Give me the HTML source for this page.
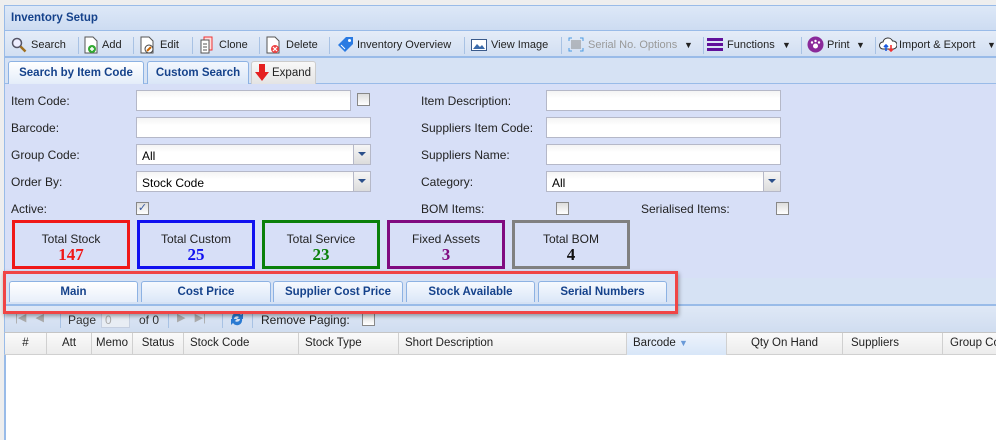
<!DOCTYPE html>
<html><head><meta charset="utf-8"><style>
*{box-sizing:border-box;margin:0;padding:0}
body{width:996px;height:440px;overflow:hidden;background:#eeeeee;font-family:"Liberation Sans",Arial,sans-serif;font-size:12px;color:#000;position:relative}
.a{position:absolute}
.title{left:4px;top:5px;width:992px;height:26px;background:linear-gradient(#dde8f7,#cddcf2);border:1px solid #99bbe8;border-right:none;font-weight:bold;color:#15428b;padding:6px 0 0 6px;font-size:11.5px}
.tb{left:4px;top:31px;width:992px;height:27px;background:linear-gradient(#e4ecf8,#d2dff2);border-left:1px solid #99bbe8;border-bottom:2px solid #99bbe8;font-size:11px}
.tbi{position:absolute;top:8px;color:#222;white-space:nowrap}
.sep{position:absolute;top:6px;width:1px;height:17px;background:#a8c2e4}
.tabs{left:4px;top:58px;width:992px;height:26px;background:#d6e2f4;border-left:1px solid #99bbe8;border-bottom:1px solid #99bbe8}
.tab{position:absolute;top:3px;height:23px;border:1px solid #8db2e3;border-bottom:none;border-radius:3px 3px 0 0;background:linear-gradient(#f3f7fd,#d9e6f7);font-weight:bold;color:#15428b;padding-top:5px;text-align:center;font-size:11.5px}
.form{left:4px;top:84px;width:992px;height:194px;background:#d7dff7;border-left:1px solid #99bbe8}
.lbl{position:absolute;color:#222}
.inp{position:absolute;height:21px;background:linear-gradient(#f4f4f4,#fff 40%);border:1px solid #b5b8c8;padding:4px 5px;font-size:12px}
.dd{position:absolute;right:0;top:0;width:17px;height:19px;background:linear-gradient(#f6f6f6,#dcdcdc);border-left:1px solid #b5b8c8}
.dd:after{content:"";position:absolute;left:4px;top:7px;border-left:4px solid transparent;border-right:4px solid transparent;border-top:4px solid #2a4f8a}
.cb{position:absolute;width:13px;height:13px;border:1px solid #888;background:linear-gradient(#ddd,#fff)}
.box{position:absolute;top:220px;width:118px;height:49px;border:3px solid;text-align:center;padding-top:9px;color:#222}
.box b{display:block;font-family:"Liberation Serif",serif;font-size:17px;line-height:18px}
.strip{left:4px;top:278px;width:992px;height:28px;background:#d6e2f4;border-left:1px solid #99bbe8;border-bottom:2px solid #99bbe8}
.t2{position:absolute;top:3px;height:21px;border:1px solid #8db2e3;border-bottom:none;border-radius:3px 3px 0 0;background:linear-gradient(#f6f9fe,#dbe7f8);font-weight:bold;color:#15428b;padding-top:4px;text-align:center;font-size:11.5px}
.pager{left:4px;top:306px;width:992px;height:26px;background:linear-gradient(#dfe8f6,#d0ddf0);border-left:1px solid #99bbe8}
.hdr{left:4px;top:332px;width:992px;height:23px;background:linear-gradient(#fafafa,#ececec);border-left:1px solid #99bbe8;border-bottom:1px solid #d0d0d0;border-top:1px solid #c5c5c5;font-size:11.5px}
.hc{position:absolute;top:0;height:22px;border-right:1px solid #d0d0d0;padding-top:4px;color:#222;white-space:nowrap;overflow:hidden}
.body{left:4px;top:355px;width:992px;height:85px;background:#fff;border-left:2px solid #99bbe8}
.hl{left:3px;top:271px;width:675px;height:43px;border:3px solid #f04545;box-shadow:1px 2px 4px rgba(0,0,0,.35)}
</style></head><body>
<div class="a title">Inventory Setup</div>
<div class="a tb">
 <svg class="a" style="left:6px;top:6px" width="16" height="16"><circle cx="6" cy="6" r="4.5" fill="#eef" stroke="#556" stroke-width="1.5"/><path d="M9.5 9.5l5 5" stroke="#a07020" stroke-width="2.5"/></svg><span class="tbi" style="left:26px">Search</span>
 <div class="sep" style="left:73px"></div>
 <svg class="a" style="left:78px;top:5px" width="16" height="18"><path d="M2 1h8l4 4v12H2z" fill="#fff" stroke="#555"/><circle cx="9" cy="13" r="4" fill="#3a3"/><path d="M9 11v4M7 13h4" stroke="#fff" stroke-width="1.5"/></svg><span class="tbi" style="left:97px">Add</span>
 <div class="sep" style="left:128px"></div>
 <svg class="a" style="left:134px;top:5px" width="16" height="18"><path d="M2 1h8l4 4v12H2z" fill="#fff" stroke="#555"/><circle cx="10" cy="13" r="4" fill="#fff" stroke="#444"/><path d="M8 15l4-4" stroke="#c60" stroke-width="2"/></svg><span class="tbi" style="left:155px">Edit</span>
 <div class="sep" style="left:187px"></div>
 <svg class="a" style="left:194px;top:5px" width="16" height="18"><path d="M5 1h8v13H5z" fill="#fdd" stroke="#e33"/><path d="M2 4h8v13H2z" fill="#fff" stroke="#555"/><path d="M4 8h4M4 11h4M4 14h4" stroke="#555"/></svg><span class="tbi" style="left:214px">Clone</span>
 <div class="sep" style="left:254px"></div>
 <svg class="a" style="left:260px;top:5px" width="16" height="18"><path d="M2 1h8l4 4v12H2z" fill="#fff" stroke="#555"/><circle cx="10" cy="13" r="4" fill="#e44"/><path d="M8 11l4 4M12 11l-4 4" stroke="#fff" stroke-width="1.2"/></svg><span class="tbi" style="left:281px">Delete</span>
 <div class="sep" style="left:324px"></div>
 <svg class="a" style="left:332px;top:5px" width="17" height="17"><path d="M9 1h7v7l-8 8-7-7z" fill="#2a7ae2"/><circle cx="12.5" cy="4.5" r="1.5" fill="#fff"/><path d="M4 9l4 4" stroke="#fff"/></svg><span class="tbi" style="left:352px">Inventory Overview</span>
 <div class="sep" style="left:459px"></div>
 <svg class="a" style="left:466px;top:8px" width="16" height="12"><rect x=".5" y=".5" width="15" height="11" fill="#fff" stroke="#3a5a8a"/><path d="M2 10l4-5 3 3 2-2 3 4z" fill="#3a6aaa"/></svg><span class="tbi" style="left:486px">View Image</span>
 <div class="sep" style="left:556px"></div>
 <svg class="a" style="left:563px;top:6px" width="16" height="15"><path d="M1 4V1h3M12 1h3v3M15 11v3h-3M4 14H1v-3" stroke="#4a9ae2" fill="none"/><path d="M4 3v9M6 3v9M8 3v9M10 3v9M12 3v9" stroke="#888"/></svg><span class="tbi" style="left:583px;color:#999">Serial No. Options</span><span class="tbi" style="left:679px;font-size:9px;top:9px">▼</span>
 <div class="sep" style="left:698px"></div>
 <svg class="a" style="left:702px;top:7px" width="16" height="13"><rect y="0" width="16" height="3" fill="#60109a"/><rect y="5" width="16" height="3" fill="#60109a"/><rect y="10" width="16" height="3" fill="#60109a"/></svg><span class="tbi" style="left:722px">Functions</span><span class="tbi" style="left:777px;font-size:9px;top:9px">▼</span>
 <div class="sep" style="left:796px"></div>
 <svg class="a" style="left:802px;top:5px" width="17" height="17"><circle cx="8.5" cy="8.5" r="8" fill="#8a2a9a"/><circle cx="8.5" cy="10" r="2.5" fill="#fff"/><circle cx="5" cy="6.5" r="1.2" fill="#fff"/><circle cx="12" cy="6.5" r="1.2" fill="#fff"/><circle cx="8.5" cy="5" r="1.2" fill="#fff"/></svg><span class="tbi" style="left:822px">Print</span><span class="tbi" style="left:851px;font-size:9px;top:9px">▼</span>
 <div class="sep" style="left:870px"></div>
 <svg class="a" style="left:874px;top:6px" width="18" height="15"><path d="M4 12a3.5 3.5 0 0 1 0-7 5 5 0 0 1 9.5-1 4 4 0 0 1 1 8z" fill="#fff" stroke="#333"/><path d="M7 14V8M5 10l2-2 2 2" stroke="#1a5ae0" stroke-width="1.6" fill="none"/><path d="M12 8v6M10 12l2 2 2-2" stroke="#e33" stroke-width="1.6" fill="none"/></svg><span class="tbi" style="left:894px">Import &amp; Export</span><span class="tbi" style="left:982px;font-size:9px;top:9px">▼</span>
</div>
<div class="a tabs">
 <div class="tab" style="left:3px;width:136px;background:linear-gradient(#fff,#e4edf9)">Search by Item Code</div>
 <div class="tab" style="left:142px;width:102px">Custom Search</div>
 <div class="tab" style="left:246px;width:65px;background:linear-gradient(#f8f8f8,#e4e4e4);border-color:#ccc;color:#222;font-weight:normal;text-align:left;padding-left:20px">Expand</div>
 <svg class="a" style="left:250px;top:6px" width="14" height="17"><path d="M4 0h6v8h4l-7 9-7-9h4z" fill="#e52020"/></svg>
</div>
<div class="a form"></div>
<span class="lbl a" style="left:11px;top:94px">Item Code:</span>
<div class="inp" style="left:136px;top:90px;width:215px"></div><div class="cb" style="left:357px;top:93px"></div>
<span class="lbl a" style="left:11px;top:121px">Barcode:</span>
<div class="inp" style="left:136px;top:117px;width:235px"></div>
<span class="lbl a" style="left:11px;top:148px">Group Code:</span>
<div class="inp" style="left:136px;top:144px;width:235px">All<div class="dd"></div></div>
<span class="lbl a" style="left:11px;top:175px">Order By:</span>
<div class="inp" style="left:136px;top:171px;width:235px">Stock Code<div class="dd"></div></div>
<span class="lbl a" style="left:11px;top:202px">Active:</span>
<div class="cb" style="left:136px;top:202px;font-size:11px;color:#3a5aa0;line-height:11px;text-align:center">✓</div>
<span class="lbl a" style="left:421px;top:94px">Item Description:</span><div class="inp" style="left:546px;top:90px;width:235px"></div>
<span class="lbl a" style="left:421px;top:121px">Suppliers Item Code:</span><div class="inp" style="left:546px;top:117px;width:235px"></div>
<span class="lbl a" style="left:421px;top:148px">Suppliers Name:</span><div class="inp" style="left:546px;top:144px;width:235px"></div>
<span class="lbl a" style="left:421px;top:175px">Category:</span><div class="inp" style="left:546px;top:171px;width:235px">All<div class="dd"></div></div>
<span class="lbl a" style="left:421px;top:202px">BOM Items:</span><div class="cb" style="left:556px;top:202px"></div>
<span class="lbl a" style="left:641px;top:202px">Serialised Items:</span><div class="cb" style="left:776px;top:202px"></div>
<div class="box" style="left:12px;border-color:#f01818">Total Stock<b style="color:#f01818">147</b></div>
<div class="box" style="left:137px;border-color:#1010f0">Total Custom<b style="color:#1010f0">25</b></div>
<div class="box" style="left:262px;border-color:#0a800a">Total Service<b style="color:#0a800a">23</b></div>
<div class="box" style="left:387px;border-color:#800a80">Fixed Assets<b style="color:#800a80">3</b></div>
<div class="box" style="left:512px;border-color:#808080">Total BOM<b style="color:#111">4</b></div>
<div class="a strip">
 <div class="t2" style="left:4px;width:129px;background:linear-gradient(#fff,#e8effa)">Main</div>
 <div class="t2" style="left:136px;width:130px">Cost Price</div>
 <div class="t2" style="left:268px;width:130px">Supplier Cost Price</div>
 <div class="t2" style="left:401px;width:129px">Stock Available</div>
 <div class="t2" style="left:533px;width:129px">Serial Numbers</div>
</div>
<div class="a pager">
 <span class="a" style="left:10px;top:5px;color:#aaa;font-size:11px">|◀ &nbsp; ◀</span>
 <div class="sep" style="left:55px;top:5px"></div>
 <span class="a" style="left:63px;top:7px;color:#333">Page</span>
 <div class="a" style="left:96px;top:5px;width:29px;height:17px;border:1px solid #c5cfe0;background:#e8edf4;color:#aaa;padding:1px 3px">0</div>
 <span class="a" style="left:134px;top:7px;color:#333">of 0</span>
 <div class="sep" style="left:163px;top:5px"></div>
 <span class="a" style="left:172px;top:5px;color:#aaa;font-size:11px">▶ &nbsp; ▶|</span>
 <div class="sep" style="left:217px;top:5px"></div>
 <svg class="a" style="left:224px;top:4px" width="16" height="17"><path d="M3 9a5 5 0 0 1 9-4l2-2v6h-6l2-2a3 3 0 0 0-5 2z" fill="#2a7ad2"/><path d="M13 9a5 5 0 0 1-9 4l-2 2V9h6l-2 2a3 3 0 0 0 5-2z" fill="#2a7ad2"/></svg>
 <div class="sep" style="left:247px;top:5px"></div>
 <span class="a" style="left:256px;top:7px;color:#222">Remove Paging:</span>
 <div class="cb" style="left:357px;top:7px"></div>
</div>
<div class="a hdr">
 <div class="hc" style="left:0;width:42px;text-align:center">#</div>
 <div class="hc" style="left:42px;width:45px;text-align:center">Att</div>
 <div class="hc" style="left:87px;width:41px;text-align:center">Memo</div>
 <div class="hc" style="left:128px;width:51px;text-align:center">Status</div>
 <div class="hc" style="left:179px;width:115px;padding-left:6px">Stock Code</div>
 <div class="hc" style="left:294px;width:100px;padding-left:6px">Stock Type</div>
 <div class="hc" style="left:394px;width:228px;padding-left:6px">Short Description</div>
 <div class="hc" style="left:622px;width:100px;padding-left:6px;background:linear-gradient(#edf3fc,#d8e6f8)">Barcode <span style="color:#6a9ad8;font-size:9px">▼</span></div>
 <div class="hc" style="left:722px;width:116px;text-align:center">Qty On Hand</div>
 <div class="hc" style="left:838px;width:100px;padding-left:8px">Suppliers</div>
 <div class="hc" style="left:938px;width:60px;padding-left:7px">Group Code</div>
</div>
<div class="a body"></div>
<div class="a hl"></div>
</body></html>
